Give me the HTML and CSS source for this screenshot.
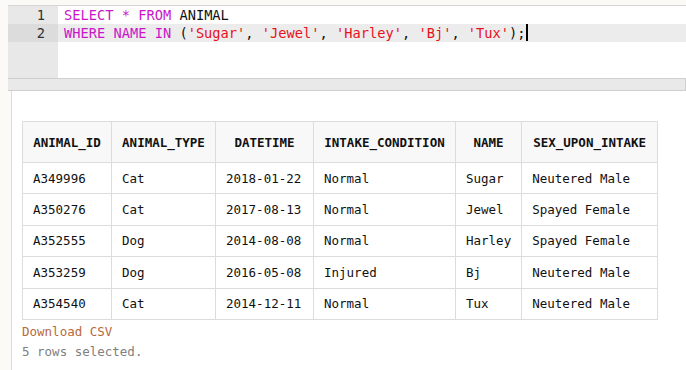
FILE: index.html
```html
<!DOCTYPE html>
<html lang="en">
<head>
  <meta charset="UTF-8">
  <title>SQL Query</title>
  <link rel="stylesheet" href="styles.css">
</head>
<body>

  <div class="editor">
    <div class="gutter">
      <div class="num">1</div>
      <div class="num active">2</div>
    </div>
    <div class="code">
      <div class="line"><span class="kw">SELECT</span> <span class="kw">*</span> <span class="kw">FROM</span> ANIMAL</div>
      <div class="line active"><span class="kw">WHERE</span> <span class="kw">NAME</span> <span class="kw">IN</span> (<span class="str">'Sugar'</span>, <span class="str">'Jewel'</span>, <span class="str">'Harley'</span>, <span class="str">'Bj'</span>, <span class="str">'Tux'</span>);<span class="cursor"></span></div>
    </div>
  </div>

  <div class="splitter"></div>

  <div class="result">
    <table>
      <colgroup>
        <col style="width: 89px">
        <col style="width: 104px">
        <col style="width: 98px">
        <col style="width: 142px">
        <col style="width: 65px">
        <col style="width: 136px">
      </colgroup>
      <thead>
        <tr>
          <th>ANIMAL_ID</th>
          <th>ANIMAL_TYPE</th>
          <th>DATETIME</th>
          <th>INTAKE_CONDITION</th>
          <th>NAME</th>
          <th>SEX_UPON_INTAKE</th>
        </tr>
      </thead>
      <tbody>
        <tr><td>A349996</td><td>Cat</td><td>2018-01-22</td><td>Normal</td><td>Sugar</td><td>Neutered Male</td></tr>
        <tr><td>A350276</td><td>Cat</td><td>2017-08-13</td><td>Normal</td><td>Jewel</td><td>Spayed Female</td></tr>
        <tr><td>A352555</td><td>Dog</td><td>2014-08-08</td><td>Normal</td><td>Harley</td><td>Spayed Female</td></tr>
        <tr><td>A353259</td><td>Dog</td><td>2016-05-08</td><td>Injured</td><td>Bj</td><td>Neutered Male</td></tr>
        <tr><td>A354540</td><td>Cat</td><td>2014-12-11</td><td>Normal</td><td>Tux</td><td>Neutered Male</td></tr>
      </tbody>
    </table>
    <a class="download" href="#">Download CSV</a>
    <div class="status">5 rows selected.</div>
  </div>

</body>
</html>
```

FILE: styles.css
```css
body {
  margin: 0;
  background: #fbfaf7;
  font-family: 'DejaVu Sans Mono', monospace;
  color: #111;
}
.editor {
  display: flex;
  margin: 5px 0 0 8px;
  height: 72px;
  border-top: 1px solid #d4d4d4;
  border-bottom: 1px solid #cfcfcf;
  background: #fff;
}
.gutter {
  width: 50px;
  background: #e8e8e8;
}
.num {
  height: 18px;
  line-height: 18px;
  padding-right: 13px;
  text-align: right;
  font-size: 13.7px;
  color: #333;
}
.num.active {
  background: #dcdcdc;
}
.code {
  flex: 1;
}
.line {
  height: 18px;
  line-height: 18px;
  padding-left: 6px;
  font-size: 13.7px;
  white-space: pre;
  color: #111;
}
.line.active {
  background: #ececec;
}
.kw {
  color: #c816c8;
}
.str {
  color: #e8101a;
}
.cursor {
  display: inline-block;
  width: 2px;
  height: 17px;
  background: #000;
  vertical-align: top;
}
.splitter {
  margin-left: 8px;
  height: 11px;
  background: #e9e9e9;
  border-bottom: 1px solid #cfcfcf;
  border-right: 1px solid #cfcfcf;
}
.result {
  margin-left: 11px;
  border-left: 1px solid #dcdcdc;
  background: #fff;
  padding: 30px 0 11px 10px;
  font-size: 12.5px;
}
table {
  border-collapse: collapse;
  table-layout: fixed;
  border: 1px solid #dcdcdc;
}
th {
  height: 40px;
  padding: 0 10px;
  background: #f8f8f8;
  border: 1px solid #dcdcdc;
  font-weight: bold;
  text-align: center;
  white-space: nowrap;
}
td {
  height: 30.4px;
  padding: 0 10px;
  border: 1px solid #dcdcdc;
  white-space: nowrap;
}
.download {
  display: block;
  margin-top: 2px;
  line-height: 20px;
  color: #b8693c;
  text-decoration: none;
  font-size: 12.5px;
}
.status {
  line-height: 20px;
  color: #808080;
  font-size: 12.5px;
}
```
